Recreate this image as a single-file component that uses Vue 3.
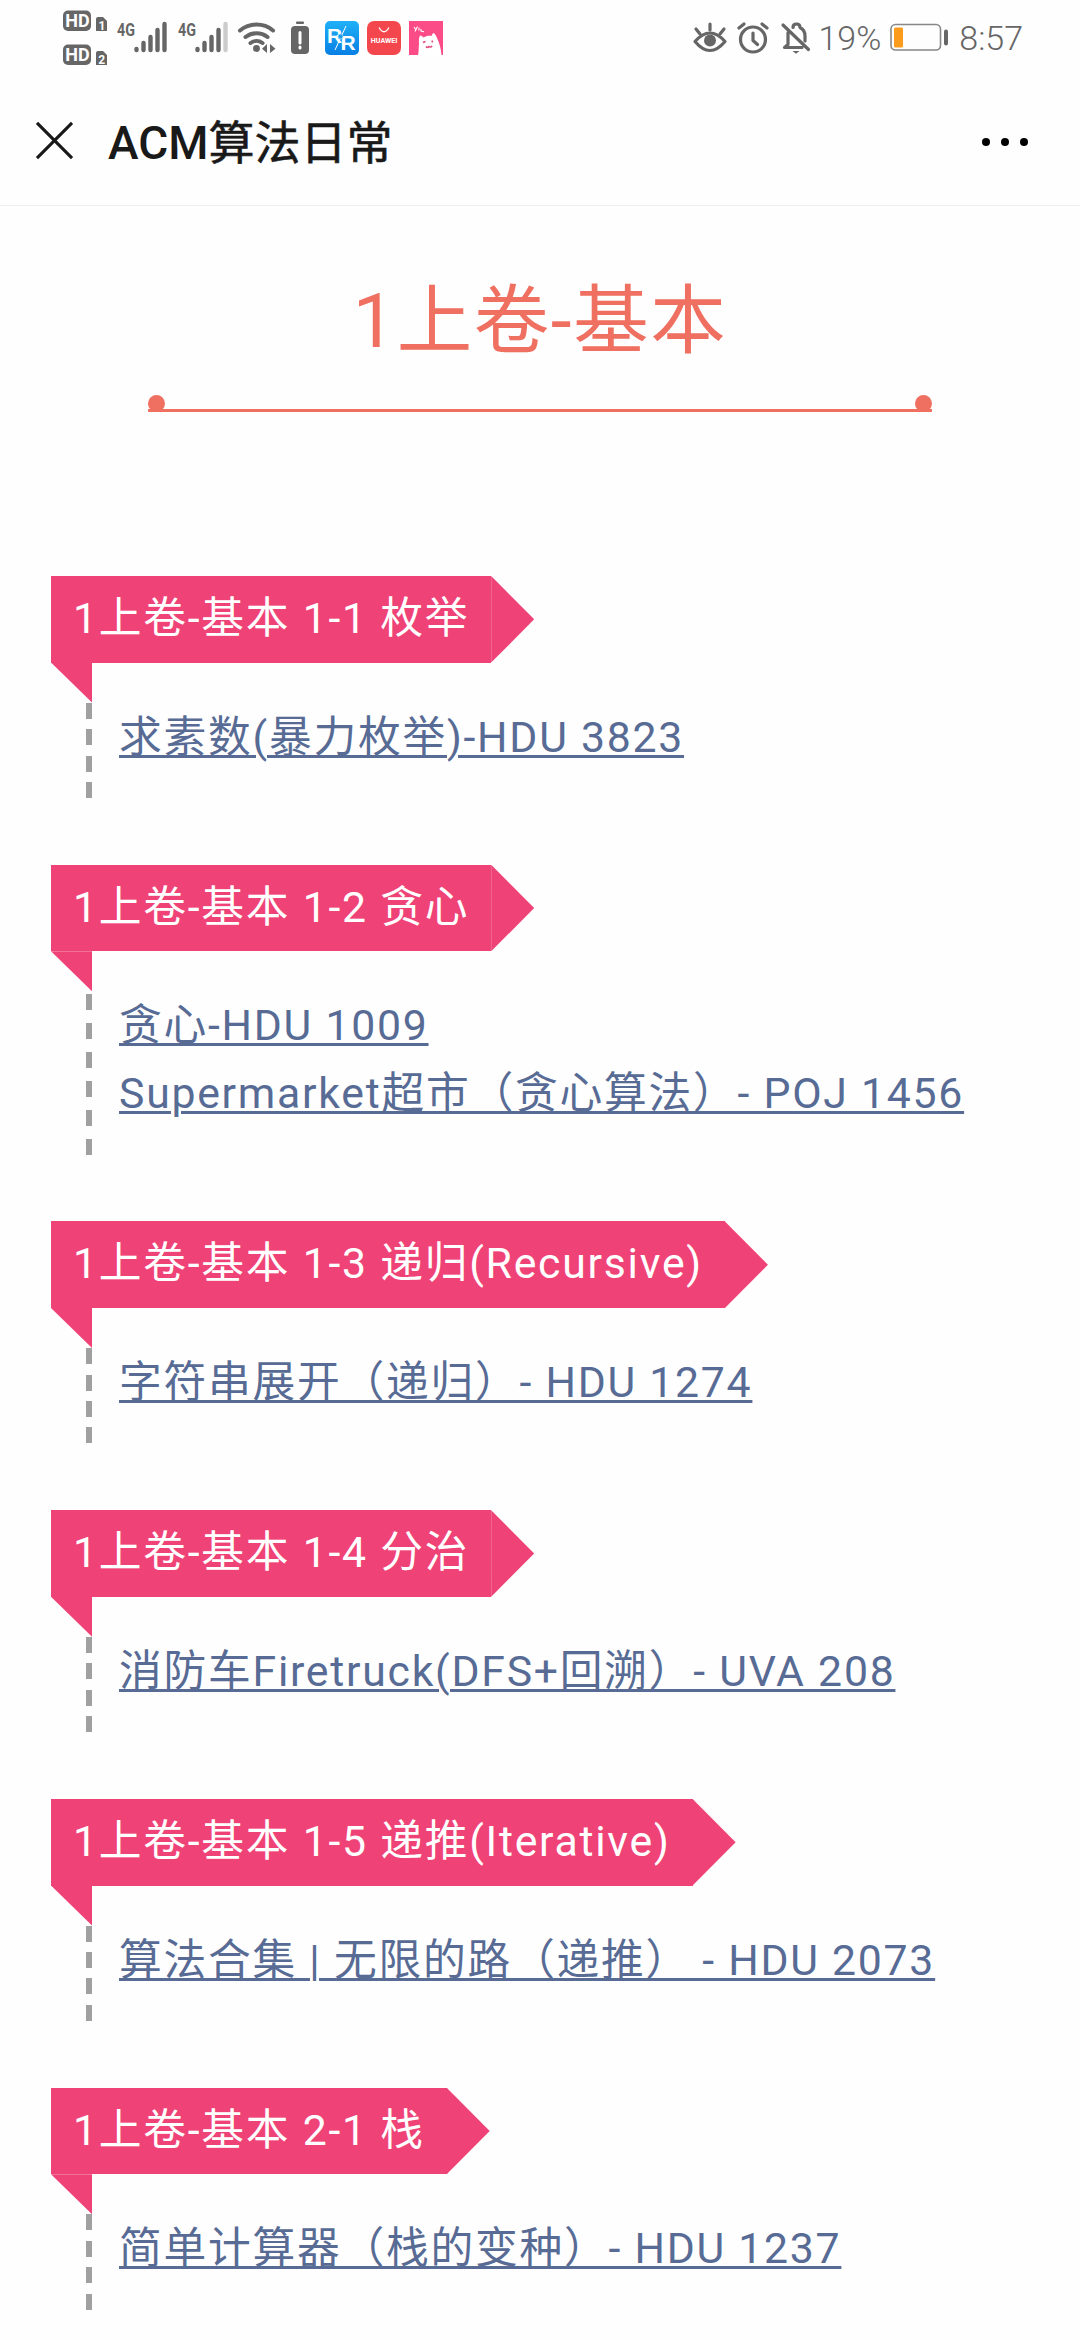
<template>
  <div class="page">
    <div class="status-bar">
      <div class="status-left">
        <svg class="hd" viewBox="0 0 46 56">
          <rect x="1" y="0.5" width="28" height="20.5" rx="5" />
          <text x="3.2" y="17.2" class="hd-text">HD</text>
          <path d="M36 7h5l4 4v10h-11v-12a2 2 0 0 1 2-2z" />
          <text x="36.4" y="19.5" class="sim-text">1</text>
          <rect x="1" y="34.5" width="28" height="20.5" rx="5" />
          <text x="3.2" y="51.2" class="hd-text">HD</text>
          <path d="M36 41h5l4 4v10h-11v-12a2 2 0 0 1 2-2z" />
          <text x="36.2" y="53.5" class="sim-text">2</text>
        </svg>

        <svg v-for="n in 2" :key="n" class="signal" viewBox="0 0 52 34">
          <text x="0" y="14.5" class="net-text" textLength="18" lengthAdjust="spacingAndGlyphs">4G</text>
          <path d="M19.5 28v1M26.5 22v7M33.5 16v13M40.5 9v20" />
          <path d="M47.5 3v26" :class="{ weak: n === 2 }" />
        </svg>

        <!-- Wifi -->
        <svg class="wifi" viewBox="0 0 38 34">
          <path d="M2 9.5a26 26 0 0 1 33 0M7.5 16a18 18 0 0 1 22 0M12.5 22a10 10 0 0 1 12 0" />
          <circle cx="18.5" cy="27.5" r="3.4" />
          <path class="arrows" d="M29 23v9l-5-4.2zM32 23v9l5.5-4.2z" />
        </svg>

        <!-- Low battery -->
        <svg class="low" viewBox="0 0 18 34">
          <rect x="5" y="0.5" width="8" height="2.6" rx="1" />
          <rect x="0" y="5" width="18" height="28" rx="4" />
          <path d="M9 11.5v10.5M9 26v1" />
        </svg>

        <svg class="app rr" viewBox="0 0 34 34">
          <defs>
            <linearGradient id="blue" x1="0" y1="0" x2="0" y2="1">
              <stop offset="0" stop-color="#1fb0f7" />
              <stop offset="1" stop-color="#087fe4" />
            </linearGradient>
          </defs>
          <rect width="34" height="34" rx="5" fill="url(#blue)" />
          <text x="2" y="21.5" class="rr-text">R</text>
          <text x="15.5" y="28.5" class="rr-text">R</text>
          <path d="M21 5L10 29" stroke="#fff" stroke-width="1" />
          <circle cx="15.5" cy="15.5" r="2.4" fill="#1d9df0" stroke="#8ad2fb" stroke-width="0.8" />
        </svg>

        <svg class="app huawei" viewBox="0 0 34 34">
          <rect width="34" height="34" rx="7" fill="#f4474d" />
          <path d="M12 6.5q5 8.5 10 0" fill="none" stroke="#fff" stroke-width="1.3" />
          <text x="3.8" y="22" class="hw-text" textLength="26.5" lengthAdjust="spacingAndGlyphs">HUAWEI</text>
        </svg>

        <svg class="app" viewBox="0 0 34 34">
          <rect width="34" height="34" fill="#fc4c88" />
          <path d="M5 6l2 3M8.5 5.5l-2.5 5M10 6.5v3M12 8v2l3 .8" fill="none" stroke="#fff" stroke-width="1.1" />
          <path d="M9 34c1-4 .5-7 1-11-.3-4 0-7 1-8.500 1.500 0 2.500 1 3.500 2 2.500-1.500 5-2 8-1.500.5-1.500 1.200-2.700 2.200-3 1.300 1 2.300 2.500 3.300 5 2.500 5 4 11 4.500 17z" fill="#fff" />
          <path d="M14 21.500l2.500-1M23 19.500l.5 2M17 25.500q1.500 2 3 0q2 1.500 3-.8" fill="none" stroke="#e0457c" stroke-width="1.5" />
        </svg>
      </div>

      <div class="status-right">
        <!-- Eye comfort -->
        <svg class="line-icon eye" viewBox="0 0 34 32">
          <path d="M2 19.5q15-17 30 0q-15 18-30 0z" />
          <path d="M17 2v6M3 7l4 5M31 7l-4 5" />
          <circle cx="17" cy="18.5" r="6" class="solid" />
        </svg>

        <!-- Alarm -->
        <svg class="line-icon alarm" viewBox="0 0 32 32">
          <circle cx="16" cy="17.5" r="12.5" />
          <path d="M16 11v7.5l4.5 4M2 6l5-4M30 6l-5-4" />
        </svg>

        <!-- Muted bell -->
        <svg class="line-icon bell" viewBox="0 0 30 32">
          <path d="M2 3L27.5 27.5M7 10.5v12l-3.5 3H21M12 5.5q0-3.5 3.5-3.5T19 5.5q5 2.5 5 8.5v5" />
          <path d="M11.5 29h7l-3.5 2.8z" class="solid" />
        </svg>

        <span class="percent">19%</span>

        <svg class="battery" viewBox="0 0 60 30">
          <rect x="1" y="1.5" width="49.5" height="25.5" rx="4.5" />
          <rect x="4" y="4.5" width="9" height="20" rx="1.5" class="charge" />
          <rect x="54" y="6.500" width="4" height="16" rx="2" class="cap" />
        </svg>

        <span class="time">8:57</span>
      </div>
    </div>

    <header class="nav">
      <svg class="close" viewBox="0 0 38 38">
        <path d="M1 1L37 37M37 1L1 37" />
      </svg>
      <h1 class="nav-title"><b>ACM</b>算法日常</h1>
      <div class="more"><i /><i /><i /></div>
    </header>

    <main class="article">
      <div class="volume">
        <h2 class="volume-title">1上卷-基本</h2>
        <div class="volume-line"><i /><i /></div>
      </div>

      <section v-for="s in sections" :key="s.title" class="chapter">
        <div class="ribbon">
          <h3 class="ribbon-body">{{ s.title }}</h3>
          <div class="ribbon-tip" />
        </div>
        <div class="chapter-body">
          <div class="rail">
            <div class="fold" />
            <div class="dashes" :class="{ long: s.links.length > 1 }">
              <i v-for="n in s.links.length * 2 + 2" :key="n" />
            </div>
          </div>
          <div class="links">
            <div v-for="link in s.links" :key="link" class="row">
              <a class="link">{{ link }}</a>
            </div>
          </div>
        </div>
      </section>
    </main>
  </div>
</template>

<script setup>
const sections = [
  { title: '1上卷-基本 1-1 枚举', links: ['求素数(暴力枚举)-HDU 3823'] },
  { title: '1上卷-基本 1-2 贪心', links: ['贪心-HDU 1009', 'Supermarket超市（贪心算法）- POJ 1456'] },
  { title: '1上卷-基本 1-3 递归(Recursive)', links: ['字符串展开（递归）- HDU 1274'] },
  { title: '1上卷-基本 1-4 分治', links: ['消防车Firetruck(DFS+回溯）- UVA 208'] },
  { title: '1上卷-基本 1-5 递推(Iterative)', links: ['算法合集 | 无限的路（递推） - HDU 2073'] },
  { title: '1上卷-基本 2-1 栈', links: ['简单计算器（栈的变种）- HDU 1237'] }
]
</script>

<style>
body {
  background: #fefefe;
}
</style>

<style scoped>
.page {
  width: 1080px;
  height: 2340px;
  overflow: hidden;
  background: #fefefe;
  font-family: Roboto, "Noto Sans CJK SC", sans-serif;
}

svg {
  display: block;
  flex: none;
  overflow: visible;
}

h1, h2, h3 {
  margin: 0;
  font-weight: 400;
}

/* status bar */
.status-bar {
  display: flex;
  justify-content: space-between;
  height: 76px;
  padding: 0 57px 0 62px;
}

.status-left,
.status-right {
  display: flex;
  align-items: center;
  fill: #666;
}

.hd { width: 46px; height: 56px; }
.hd-text { font-size: 18px; font-weight: 700; fill: #fefefe; }
.sim-text { font-size: 12px; font-weight: 700; fill: #fefefe; }

.signal {
  width: 52px;
  height: 34px;
  margin-left: 9px;
}
.net-text { font-size: 18px; font-weight: 700; }
.signal path {
  stroke: #666;
  stroke-width: 4.4;
  stroke-linecap: round;
}
.signal .weak { stroke: #ccc; }

.wifi { width: 38px; height: 34px; margin-left: 8px; }
.wifi path {
  fill: none;
  stroke: #666;
  stroke-width: 4;
  stroke-linecap: round;
}
.wifi .arrows { fill: #666; stroke: none; }

.low { width: 18px; height: 34px; margin-left: 15px; }
.low path {
  stroke: #fefefe;
  stroke-width: 3;
  stroke-linecap: round;
}

.app { width: 34px; height: 34px; margin-left: 8px; }
.app.rr { margin-left: 16px; }
.rr-text { font: 700 21px "Liberation Sans", sans-serif; fill: #fff; }
.hw-text { font-size: 7px; font-weight: 700; fill: #fff; }

.status-right {
  color: #666;
  font-size: 34px;
  font-weight: 350;
}
.line-icon {
  fill: none;
  stroke: #666;
  stroke-width: 3.2;
  stroke-linecap: round;
  stroke-linejoin: round;
}
.line-icon .solid { fill: #666; stroke: none; }
.eye { width: 34px; height: 32px; margin-right: 10px; }
.alarm { width: 32px; height: 32px; margin-right: 12px; }
.bell { width: 30px; height: 32px; margin-right: 7px; }
.battery { width: 60px; height: 30px; margin: 0 9px; }
.battery rect { fill: none; stroke: #888; stroke-width: 1.6; }
.battery .charge { fill: #fd9b1c; stroke: none; }
.battery .cap { fill: #666; stroke: none; }

/* title bar */
.nav {
  display: flex;
  align-items: center;
  box-sizing: border-box;
  height: 130px;
  padding: 0 52px 0 36px;
  border-bottom: 1px solid #efefef;
}
.close {
  width: 37px;
  height: 37px;
  stroke: #191919;
  stroke-width: 3.2;
}
.nav-title {
  flex: 1;
  padding: 5px 0 0 35px;
  color: #191919;
  font-size: 46px;
  line-height: 60px;
  -webkit-text-stroke: 0.6px #191919;
}
.nav-title b {
  font-weight: 500;
  -webkit-text-stroke: 0;
}
.more {
  display: flex;
  gap: 11px;
  padding-top: 3px;
}
.more i {
  width: 8px;
  height: 8px;
  border-radius: 50%;
  background: #000;
}

/* article */
.volume {
  display: flex;
  flex-direction: column;
  align-items: center;
  height: 370px;
}
.volume-title {
  padding-top: 65px;
  color: #ef7060;
  font-size: 75.5px;
  letter-spacing: 1.5px;
  line-height: 100px;
}
.volume-line {
  display: flex;
  justify-content: space-between;
  box-sizing: border-box;
  width: 784px;
  height: 17px;
  margin-top: 24px;
  border-bottom: 3px solid #ef7060;
}
.volume-line i {
  width: 17px;
  height: 17px;
  border-radius: 50%;
  background: #ef7060;
}

.chapter {
  margin-left: 51px;
  padding-bottom: 66.75px;
}
.ribbon {
  display: flex;
  height: 86.6px;
}
.ribbon-body {
  padding: 0 22px;
  background: #ef4277;
  color: #fff;
  font-size: 42.75px;
  letter-spacing: 1.75px;
  line-height: 85.6px;
  white-space: nowrap;
}
.ribbon-tip {
  width: 43px;
  background: #ef4277;
  clip-path: polygon(0 0, 100% 50%, 0 100%);
}

.chapter-body {
  display: flex;
}
.rail {
  display: flex;
  flex-direction: column;
  align-items: flex-end;
  width: 41px;
}
.fold {
  width: 41px;
  height: 40px;
  background: #ef4277;
  clip-path: polygon(0 0, 100% 0, 100% 100%);
}
.dashes {
  display: flex;
  flex: 1;
  flex-direction: column;
  justify-content: space-between;
  width: 6px;
}
.dashes.long {
  padding-top: 2.5px;
}
.dashes i {
  height: 16px;
  background: #a0a0a0;
}

.links {
  margin-left: 27px;
  padding: 40px 0 27.4px;
}
.row {
  height: 68px;
  color: #576b95;
  font-size: 42.75px;
  letter-spacing: 1.75px;
  line-height: 68px;
  white-space: nowrap;
}
.link {
  text-decoration: underline;
  text-decoration-thickness: 2.7px;
  text-underline-offset: 3px;
}
</style>
